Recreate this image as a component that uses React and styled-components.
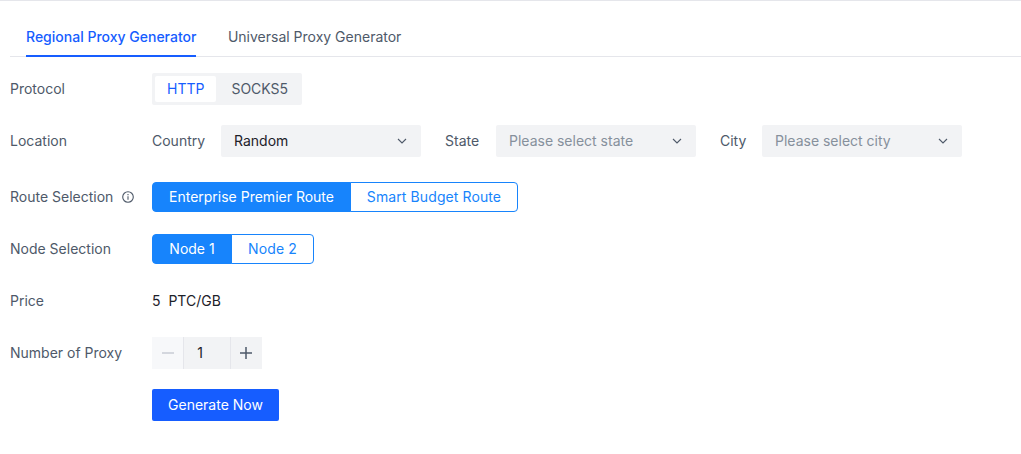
import React from "react";
import styled, { createGlobalStyle } from "styled-components";

const Global = createGlobalStyle`
  html, body { margin: 0; padding: 0; background: #fff; }
  body { font-family: Inter, "Liberation Sans", sans-serif; font-size: 14px; line-height: 22px; color: #4e5969; }
  * { box-sizing: border-box; }
`;

const Page = styled.div`
  width: 1021px;
  height: 454px;
  border-top: 1px solid #e5e6eb;
  padding: 0 0 0 10px;
  overflow: hidden;
`;

const Tabs = styled.div`
  display: flex;
  height: 56px;
  padding: 16px 0 0 16px;
  gap: 31.5px;
  border-bottom: 1px solid #e5e6eb;
`;

const Tab = styled.div`
  height: 40px;
  line-height: 40px;
  font-size: 14px;
  font-weight: ${p => (p.$active ? 500 : 400)};
  color: ${p => (p.$active ? "#165dff" : "#4e5969")};
  border-bottom: 2px solid ${p => (p.$active ? "#165dff" : "transparent")};
`;

const Form = styled.div`
  display: flex;
  flex-direction: column;
  gap: 20px;
  padding-top: 16px;
`;

const Row = styled.div`
  display: flex;
  align-items: center;
  min-height: 32px;
  margin-bottom: ${p => (p.$spaced ? "4px" : 0)};
`;

const Label = styled.div`
  width: 142px;
  flex: none;
  display: flex;
  align-items: center;
  gap: 8px;
  color: #4e5969;
`;

const Segmented = styled.div`
  display: flex;
  padding: 3px;
  height: 32px;
  background: #f2f3f5;
  border-radius: 2px;
`;

const Segment = styled.div`
  height: 26px;
  line-height: 26px;
  padding: ${p => (p.$active ? "0 12px" : "0 11px 0 15px")};
  border-radius: 2px;
  color: ${p => (p.$active ? "#165dff" : "#4e5969")};
  background: ${p => (p.$active ? "#fff" : "transparent")};
`;

const InlineLabel = styled.span`
  width: ${p => p.$width}px;
  flex: none;
  margin-left: ${p => (p.$first ? 0 : "24px")};
  color: #4e5969;
`;

const Select = styled.div`
  width: 200px;
  height: 32px;
  padding: 0 13px;
  display: flex;
  align-items: center;
  justify-content: space-between;
  background: #f2f3f5;
  border-radius: 2px;
  color: ${p => (p.$placeholder ? "#86909c" : "#1d2129")};
`;

const Radio = styled.div`
  display: flex;
  height: 30px;
`;

const RadioButton = styled.div`
  width: ${p => p.$width}px;
  text-align: center;
  white-space: nowrap;
  line-height: 28px;
  letter-spacing: ${p => (p.$active ? 0 : "0.1px")};
  border: 1px solid #1784fc;
  margin-left: ${p => (p.$first ? 0 : "-1px")};
  color: ${p => (p.$active ? "#fff" : "#1784fc")};
  background: ${p => (p.$active ? "#1784fc" : "#fff")};
  border-radius: ${p => (p.$first ? "4px 0 0 4px" : "0 4px 4px 0")};
`;

const Value = styled.div`
  color: #1d2129;
  white-space: pre;
`;

const Stepper = styled.div`
  display: flex;
  height: 32px;
  width: 110px;
  background: #f2f3f5;
  border-radius: 2px;
`;

const StepButton = styled.div`
  width: 32px;
  display: flex;
  align-items: center;
  justify-content: center;
  background: ${p => (p.$disabled ? "#f7f8fa" : "#f2f3f5")};
  color: ${p => (p.$disabled ? "#c9cdd4" : "#4e5969")};
  ${p => (p.$disabled ? "border-right: 1px solid #e5e6eb;" : "border-left: 1px solid #e5e6eb; padding-right: 1px;")}
`;

const StepValue = styled.div`
  flex: 1;
  text-align: center;
  line-height: 32px;
  color: #1d2129;
  padding-right: 14px;
`;

const Submit = styled.div`
  width: 127px;
  height: 32px;
  margin-left: 142px;
  line-height: 32px;
  text-align: center;
  background: #165dff;
  color: #fff;
  border-radius: 2px;
`;

const Chevron = () => (
  <svg width="12" height="12" viewBox="0 0 12 12" fill="none" stroke="#4e5969" strokeWidth="1.1">
    <path d="M2 4l4 4 4-4" />
  </svg>
);

const Info = () => (
  <svg width="14" height="14" viewBox="0 0 14 14" fill="none" stroke="#4e5969" strokeWidth="1.1">
    <circle cx="7" cy="7" r="5.3" />
    <path d="M7 6.2v3.6M7 4v1.2" />
  </svg>
);

const Icon = ({ d }) => (
  <svg width="12" height="12" viewBox="0 0 12 12" fill="none" stroke="currentColor" strokeWidth="1.5">
    <path d={d} />
  </svg>
);

export default function App() {
  return (
    <Page>
      <Global />
      <Tabs>
        <Tab $active>Regional Proxy Generator</Tab>
        <Tab>Universal Proxy Generator</Tab>
      </Tabs>
      <Form>
        <Row>
          <Label>Protocol</Label>
          <Segmented>
            <Segment $active>HTTP</Segment>
            <Segment>SOCKS5</Segment>
          </Segmented>
        </Row>
        <Row $spaced>
          <Label>Location</Label>
          <InlineLabel $first $width={69}>Country</InlineLabel>
          <Select>Random<Chevron /></Select>
          <InlineLabel $width={51}>State</InlineLabel>
          <Select $placeholder>Please select state<Chevron /></Select>
          <InlineLabel $width={42}>City</InlineLabel>
          <Select $placeholder>Please select city<Chevron /></Select>
        </Row>
        <Row>
          <Label>Route Selection<Info /></Label>
          <Radio>
            <RadioButton $first $active $width={199}>Enterprise Premier Route</RadioButton>
            <RadioButton $width={168}>Smart Budget Route</RadioButton>
          </Radio>
        </Row>
        <Row>
          <Label>Node Selection</Label>
          <Radio>
            <RadioButton $first $active $width={80}>Node 1</RadioButton>
            <RadioButton $width={83}>Node 2</RadioButton>
          </Radio>
        </Row>
        <Row>
          <Label>Price</Label>
          <Value>5  PTC/GB</Value>
        </Row>
        <Row>
          <Label>Number of Proxy</Label>
          <Stepper>
            <StepButton $disabled><Icon d="M0 6h12" /></StepButton>
            <StepValue>1</StepValue>
            <StepButton><Icon d="M0 6h12M6 0v12" /></StepButton>
          </Stepper>
        </Row>
        <Submit>Generate Now</Submit>
      </Form>
    </Page>
  );
}
